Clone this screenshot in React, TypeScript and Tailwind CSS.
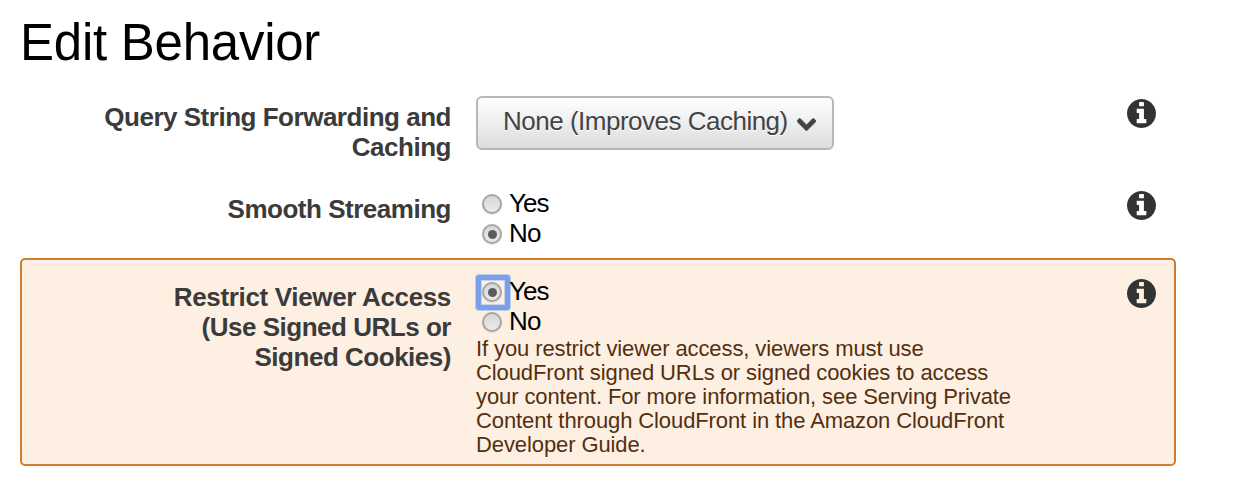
import React from "react";
import clsx from "clsx";

const InfoIcon = () => (
  <svg
    viewBox="128 128 1536 1536"
    className="mt-[3px] h-[29px] w-[29px] shrink-0"
    fill="#333333"
    aria-hidden="true"
  >
    <path d="M1152 1376v-160q0-14-9-23t-23-9h-96v-512q0-14-9-23t-23-9h-320q-14 0-23 9t-9 23v160q0 14 9 23t23 9h96v320h-96q-14 0-23 9t-9 23v160q0 14 9 23t23 9h448q14 0 23-9t9-23zM1024 480v-160q0-14-9-23t-23-9h-192q-14 0-23 9t-9 23v160q0 14 9 23t23 9h192q14 0 23-9t9-23zM1664 896q0 209-103 385.5t-279.5 279.5-385.5 103-385.5-103-279.5-279.5-103-385.5 103-385.5 279.5-279.5 385.5-103 385.5 103 279.5 279.5 103 385.5z" />
  </svg>
);

const ChevronIcon = () => (
  <svg
    viewBox="90 533 1612 1035"
    className="mt-[7px] ml-[9px] h-[13px] w-[19px] shrink-0"
    fill="#444444"
    stroke="#444444"
    strokeWidth="60"
    aria-hidden="true"
  >
    <path d="M1683 808l-742 741q-19 19-45 19t-45-19l-742-741q-19-19-19-45.5t19-45.5l166-165q19-19 45-19t45 19l531 531 531-531q19-19 45-19t45 19l166 165q19 19 19 45.5t-19 45.5z" />
  </svg>
);

type RadioProps = {
  label: string;
  checked?: boolean;
  focused?: boolean;
};

const Radio = ({ label, checked, focused }: RadioProps) => (
  <div className="flex h-[30px] items-start" role="radio" aria-checked={!!checked}>
    <span
      className={clsx(
        "mt-[6px] ml-[6px] flex h-5 w-5 items-center justify-center rounded-full border-2 border-[#a6a6a6] bg-linear-to-b from-[#d6d6d6] to-[#ececec] shadow-[0_1px_1px_rgba(0,0,0,0.12)]",
        focused &&
          "relative before:absolute before:-top-[9px] before:-left-[8px] before:h-[35px] before:w-[34px] before:rounded-[3px] before:border-[5px] before:border-[#7c9fea] before:shadow-[0_0_0_1px_#bccbec,inset_0_0_0_1px_#c9d3ec]"
      )}
    >
      {checked && <span className="h-[9px] w-[9px] rounded-full bg-[#5d5d5d]" />}
    </span>
    {/* relative keeps the text above the focus ring */}
    <span className="relative ml-[7px] text-[26px] leading-[30px] tracking-[-0.9px] text-black">
      {label}
    </span>
  </div>
);

type RowProps = {
  label: React.ReactNode;
  highlighted?: boolean;
  className?: string;
  children: React.ReactNode;
};

const Row = ({ label, highlighted, className, children }: RowProps) => (
  <div
    className={clsx(
      "flex items-start rounded-[5px] border-2 pt-4 pr-[18px] pb-2",
      highlighted ? "border-[#d17d2f] bg-[#fdf0e2]" : "border-transparent",
      className
    )}
  >
    <div className="mt-[6px] w-[429px] shrink-0 text-right text-[26px] leading-[30px] font-bold tracking-[-0.48px] text-[#3b3b3b]">
      {label}
    </div>
    <div className="ml-[25px] grow">{children}</div>
    <InfoIcon />
  </div>
);

const App = () => {
  return (
    <div className="h-[486px] w-[1234px] overflow-hidden bg-white pl-5 font-['Liberation_Sans',Arial,sans-serif]">
      <h1 className="h-[78px] pt-[14px] text-[51px] leading-[58px] tracking-[-0.25px] text-black">
        Edit Behavior
      </h1>
      <div className="w-[1156px]">
        <Row
          className="h-[92px]"
          label={
            <>
              Query String Forwarding and
              <br />
              Caching
            </>
          }
        >
          <button className="flex h-[54px] w-[358px] items-center rounded-md border-2 border-[#b7b7b7] bg-linear-to-b from-white to-[#dddddd] pb-[5px] pl-[25px] text-[26px] leading-[30px] tracking-[-0.5px] whitespace-nowrap text-[#444444] [text-shadow:0_1px_0_#fff]">
            None (Improves Caching)
            <ChevronIcon />
          </button>
        </Row>
        <Row label="Smooth Streaming">
          <Radio label="Yes" />
          <Radio label="No" checked />
        </Row>
        <Row
          highlighted
          label={
            <>
              <span className="tracking-[-0.34px]">Restrict Viewer Access</span>
              <br />
              (Use Signed URLs or
              <br />
              Signed Cookies)
            </>
          }
        >
          <Radio label="Yes" checked focused />
          <Radio label="No" />
          <p className="-mb-px pt-px text-[22px] leading-6 tracking-[-0.1px] whitespace-nowrap text-[#532f10]">
            If you restrict viewer access, viewers must use
            <br />
            CloudFront signed URLs or signed cookies to access
            <br />
            your content. For more information, see Serving Private
            <br />
            Content through CloudFront in the Amazon CloudFront
            <br />
            Developer Guide.
          </p>
        </Row>
      </div>
    </div>
  );
};

export default App;
